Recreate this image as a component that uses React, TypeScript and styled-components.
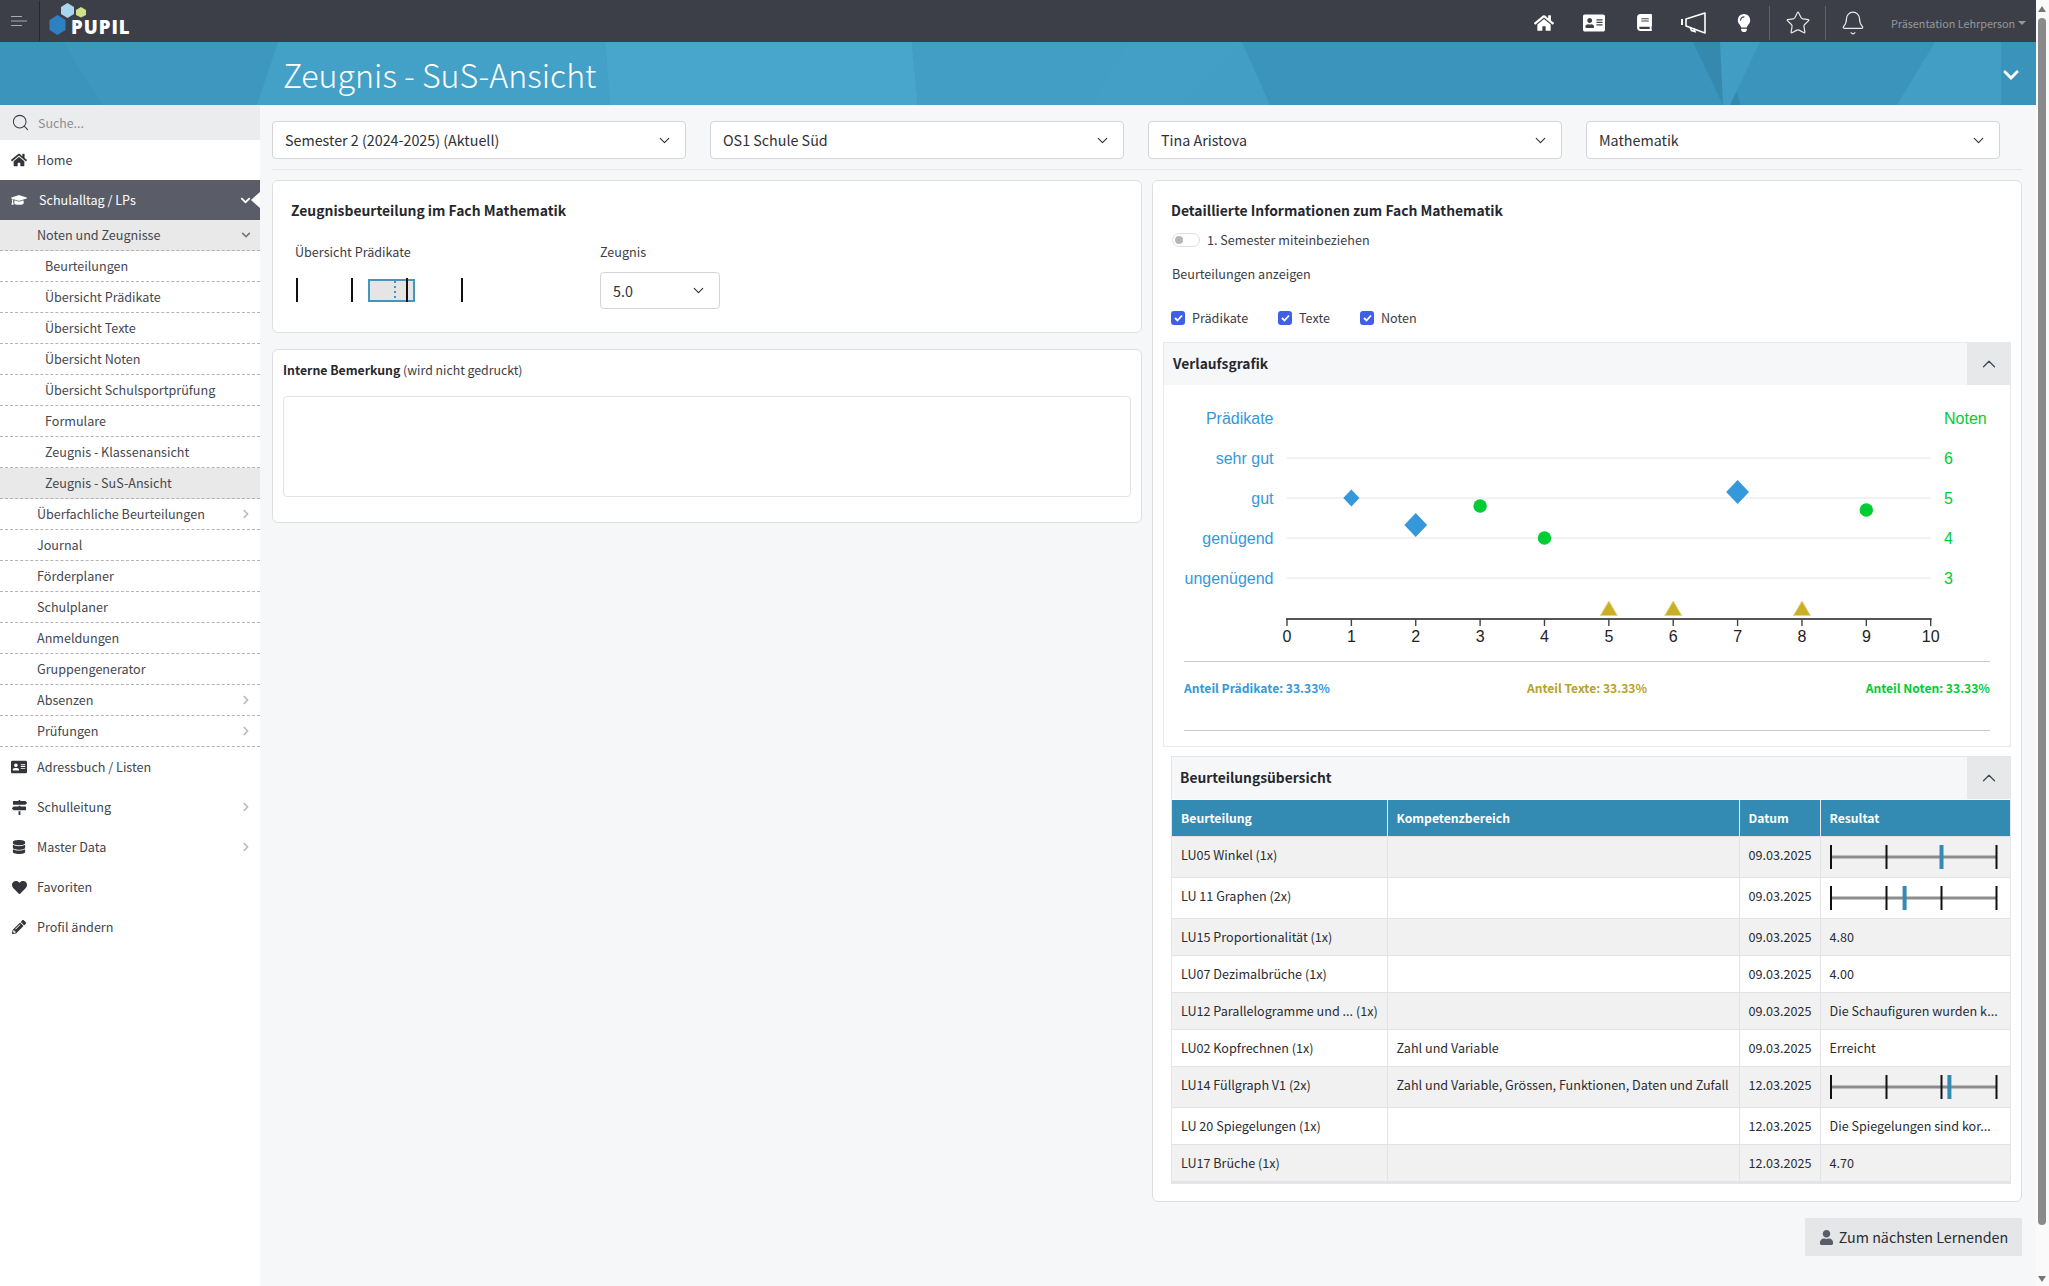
import styled, { createGlobalStyle } from 'styled-components';
import { FaAddressCard, FaBook, FaChevronDown, FaChevronRight, FaDatabase, FaGraduationCap, FaHeart, FaHome, FaLightbulb, FaMapSigns, FaPencilAlt, FaUser } from 'react-icons/fa';
import { Bell, ChevronDown, ChevronUp, Search, Star } from 'lucide-react';

const SANS = '"Noto Sans CJK JP", "Noto Sans", sans-serif';
const ARIAL = '"Liberation Sans", Arial, sans-serif';

const GlobalStyle = createGlobalStyle`
  html, body { margin: 0; padding: 0; height: 100%; overflow: hidden; }
  body { font-family: ${SANS}; font-size: 12.6px; line-height: 20px; color: #3a3d45; background: #f6f7f9; }
  * { box-sizing: border-box; }
`;

const Shell = styled.div`
  display: flex;
  width: 2049px;
  height: 1286px;
  overflow: hidden;
`;

const Page = styled.div`
  width: 2036px;
  display: flex;
  flex-direction: column;
`;

const ScrollTrack = styled.div`
  width: 13px;
  background: #fafafa;
  display: flex;
  flex-direction: column;
  align-items: flex-start;
  padding: 6px 0 4px 2px;
`;

const ScrollThumb = styled.div`
  width: 8px;
  height: 1207px;
  margin-top: 6px;
  background: #8a8a8a;
  border-radius: 4px;
`;

const ScrollArrow = styled.div<{ $down?: boolean }>`
  width: 0;
  height: 0;
  border-left: 4px solid transparent;
  border-right: 4px solid transparent;
  ${(p) => (p.$down ? 'border-top: 6px solid #777; margin-top: auto;' : 'border-bottom: 6px solid #777;')}
`;

const TopBar = styled.header`
  height: 42px;
  flex: none;
  background: #3c3f48;
  display: flex;
  align-items: center;
`;

const MenuCell = styled.div`
  width: 40px;
  height: 40px;
  display: flex;
  align-items: center;
  justify-content: center;
  border-right: 1px solid #26282e;
  padding-right: 1px;
`;

const LogoCell = styled.div`
  margin-left: 9px;
  width: 100px;
  height: 42px;
  position: relative;
`;

const LogoMark = styled.svg`
  position: absolute;
  left: 0;
  top: 2px;
`;

const LogoWord = styled.span`
  position: absolute;
  left: 22px;
  top: 16px;
  font-family: "Open Sans", sans-serif;
  font-weight: 800;
  font-size: 18.500px;
  line-height: 22px;
  letter-spacing: 1px;
  color: #fff;
`;

const TopIcons = styled.div`
  margin-left: auto;
  padding-top: 3px;
  display: flex;
  align-items: center;
  height: 100%;
`;

const TopIcon = styled.div<{ $w?: number; $divider?: boolean }>`
  width: ${(p) => p.$w ?? 50}px;
  height: 34px;
  display: flex;
  align-items: center;
  justify-content: center;
  color: #fff;
  border-left: ${(p) => (p.$divider ? '1px solid #5f626b' : 'none')};
`;

const UserMenu = styled.div`
  width: 157px;
  padding-left: 12px;
  color: #95979c;
  font-size: 10.8px;
  white-space: nowrap;
  display: flex;
  align-items: center;
  gap: 3px;
`;

const Caret = styled.span`
  width: 0;
  height: 0;
  border-left: 4px solid transparent;
  border-right: 4px solid transparent;
  border-top: 4px solid #95979c;
`;

const Banner = styled.section`
  height: 63px;
  flex: none;
  position: relative;
  background: #3b94bb;
  display: flex;
  align-items: center;
  padding-left: 283px;
  overflow: hidden;
`;

const BannerArt = styled.svg`
  position: absolute;
  left: 0;
  top: 0;
`;

const BannerTitle = styled.h1`
  position: relative;
  margin: 0;
  font-family: "Noto Sans CJK JP Light", ${SANS};
  font-weight: 300;
  font-size: 32.2px;
  line-height: 46px;
  color: #fff;
`;

const BannerToggle = styled.div`
  position: absolute;
  right: 0;
  top: 0;
  width: 35px;
  height: 63px;
  padding: 2px 0 0 1px;
  background: #3a93ba;
  color: #fff;
  display: flex;
  align-items: center;
`;

const Body = styled.div`
  flex: 1;
  display: flex;
  min-height: 0;
`;

const Sidebar = styled.nav`
  width: 260px;
  flex: none;
  background: #fff;
`;

const SearchRow = styled.div`
  height: 35px;
  background: #ebecee;
  display: flex;
  align-items: center;
  padding-left: 11px;
  gap: 8px;
  color: #8c8e94;
  font-size: 12.4px;
`;

const SearchIcon = styled(Search)`
  color: #3c3f48;
`;

const MainItem = styled.div<{ $active?: boolean }>`
  height: 40px;
  position: relative;
  display: flex;
  align-items: center;
  padding: 0 9px 0 11px;
  gap: ${(p) => (p.$active ? 12 : 10)}px;
  color: ${(p) => (p.$active ? '#fff' : '#41444c')};
  background: ${(p) => (p.$active ? '#5a5d67' : '#fff')};
  ${(p) =>
    p.$active &&
    `&::after {
      content: '';
      position: absolute;
      right: 0;
      top: 12px;
      border-top: 8px solid transparent;
      border-bottom: 8px solid transparent;
      border-right: 9px solid #fff;
    }`}
`;

const MainIcon = styled.span<{ $dark?: boolean }>`
  width: 16px;
  display: flex;
  justify-content: center;
  color: ${(p) => (p.$dark ? '#33353b' : 'inherit')};
  font-size: 15px;
`;

const Grow = styled.span`
  flex: 1;
`;

const SubItem = styled.div<{ $depth?: number; $shaded?: boolean }>`
  height: 31px;
  display: flex;
  align-items: center;
  padding-left: ${(p) => ((p.$depth ?? 1) === 2 ? 45 : 37)}px;
  padding-right: 9px;
  color: #45474f;
  background: ${(p) => (p.$shaded ? '#e9e9e9' : '#fff')};
  border-bottom: 1px dashed #b4b4b4;
`;

const SubChevron = styled.span<{ $dark?: boolean }>`
  color: ${(p) => (p.$dark ? '#77797e' : '#b9bbbe')};
  font-size: 10px;
  display: flex;
`;

const Content = styled.main`
  flex: 1;
  min-width: 0;
  padding: 16px 14px 0 12px;
`;

const Filters = styled.div`
  display: flex;
  gap: 24.500px;
  padding-bottom: 10px;
  border-bottom: 1px solid #e5e7ea;
  margin-bottom: 10px;
`;

const SelectBox = styled.div`
  width: 413.500px;
  height: 38px;
  background: #fff;
  border: 1px solid #d2d5da;
  border-radius: 4px;
  display: flex;
  align-items: center;
  justify-content: space-between;
  padding: 0 12px;
  font-size: 14.3px;
  color: #2f3137;
`;

const GradeSelect = styled(SelectBox)`
  width: 120px;
  height: 37px;
  margin-top: 10px;
`;

const Columns = styled.div`
  display: grid;
  grid-template-columns: 870px 870px;
  gap: 10px;
  align-items: start;
`;

const Stack = styled.div`
  display: flex;
  flex-direction: column;
`;

const Card = styled.section`
  background: #fff;
  border: 1px solid #dcdee2;
  border-radius: 6px;
`;

const GradeCard = styled(Card)`
  height: 153px;
  padding: 19px 18px 0;
  margin-bottom: 16px;
`;

const CardTitle = styled.h2`
  margin: 0;
  font-size: 13.9px;
  font-weight: 700;
  line-height: 20px;
  color: #26282d;
`;

const GradeRow = styled.div`
  display: flex;
  margin: 22px 0 0 4px;
`;

const GradeOverview = styled.div`
  width: 305px;
`;

const FieldLabel = styled.div`
  line-height: 20px;
  color: #3a3d45;
`;

const MiniScale = styled.svg`
  display: block;
  margin-top: 16px;
`;

const NoteCard = styled(Card)`
  height: 174px;
  padding: 10px 10px 0;
`;

const NoteTitle = styled.div`
  font-size: 12.3px;
  color: #3a3d45;
  b {
    color: #26282d;
    font-weight: 700;
  }
`;

const NoteArea = styled.div`
  height: 101px;
  margin-top: 16px;
  border: 1px solid #e2e3e6;
  border-radius: 4px;
`;

const DetailCard = styled(Card)`
  height: 1022px;
  padding: 19px 10px 0;
`;

const DetailTitle = styled(CardTitle)`
  padding-left: 8px;
`;

const ToggleRow = styled.div`
  margin: 10px 0 14px 9px;
  display: flex;
  align-items: center;
  gap: 7px;
`;

const ToggleTrack = styled.span`
  width: 28px;
  height: 14px;
  border: 1px solid #dcdee3;
  border-radius: 7px;
  background: #fff;
  display: flex;
  align-items: center;
  padding-left: 2px;
`;

const ToggleKnob = styled.span`
  width: 8px;
  height: 8px;
  border-radius: 50%;
  background: #b5b6b9;
`;

const PlainLine = styled.div`
  margin-left: 9px;
`;

const CheckRow = styled.div`
  margin: 24px 0 14px 8px;
  display: flex;
  height: 20px;
`;

const CheckItem = styled.label<{ $w: number }>`
  width: ${(p) => p.$w}px;
  display: flex;
  align-items: center;
  gap: 7px;
`;

const CheckBox = styled.span`
  width: 14px;
  height: 14px;
  border-radius: 3px;
  background: #3f5fe8;
  display: flex;
  align-items: center;
  justify-content: center;
`;

const Panel = styled.div`
  height: 405px;
  border: 1px solid #e8e9eb;
`;

const PanelHead = styled.div<{ $inset?: number }>`
  height: 42px;
  background: #f6f7f9;
  display: flex;
  align-items: center;
  justify-content: space-between;
  padding-left: ${(p) => p.$inset ?? 9}px;
`;

const PanelTitle = styled.span<{ $lift?: number }>`
  font-weight: 700;
  font-size: 13.8px;
  color: #26282d;
  margin-bottom: ${(p) => p.$lift ?? 2}px;
`;

const PanelButton = styled.div`
  width: 43px;
  height: 100%;
  background: #e7e8ea;
  display: flex;
  align-items: center;
  justify-content: center;
  color: #3d4352;
`;

const ChartSvg = styled.svg`
  display: block;
`;

const Stats = styled.div`
  margin: 0 20px;
  height: 70px;
  padding-top: 16px;
  border-top: 1px solid #c9cacc;
  border-bottom: 1px solid #c9cacc;
  display: grid;
  grid-template-columns: 1fr auto 1fr;
  font-weight: 700;
  font-size: 12.1px;
`;

const Stat = styled.span<{ $color: string; $end?: boolean }>`
  color: ${(p) => p.$color};
  justify-self: ${(p) => (p.$end ? 'end' : 'start')};
`;

const TablePanel = styled.div`
  margin: 9px 0 0 8px;
  border: 1px solid #e4e6e9;
  border-bottom-width: 2px;
`;

const Table = styled.table`
  width: 838px;
  table-layout: fixed;
  border-collapse: collapse;
  color: #2a2c31;
  margin-top: 1px;
`;

const HeadCell = styled.th<{ $w: number }>`
  width: ${(p) => p.$w}px;
  height: 36px;
  background: #338bb3;
  color: #fff;
  font-size: 12.2px;
  font-weight: 700;
  text-align: left;
  padding: 0 9px;
  border-right: 1px solid #e4e6e9;
  &:last-child {
    border-right: none;
  }
`;

const Row = styled.tr<{ $tall?: boolean }>`
  height: ${(p) => (p.$tall ? 41 : 37)}px;
  &:nth-child(odd) {
    background: #f1f1f1;
  }
`;

const Cell = styled.td<{ $raised?: boolean }>`
  padding: 0 9px ${(p) => (p.$raised ? 3 : 0)}px;
  border: 1px solid #e1e3e6;
  border-left: none;
  white-space: nowrap;
  overflow: hidden;
  &:last-child {
    border-right: none;
  }
`;

const ResultSvg = styled.svg`
  display: block;
`;

const Footer = styled.div`
  display: flex;
  justify-content: flex-end;
  margin-top: 16px;
`;

const NextButton = styled.div`
  width: 217px;
  height: 38px;
  background: #e5e6e8;
  display: flex;
  align-items: center;
  justify-content: center;
  gap: 5px;
  font-size: 14.3px;
  color: #2a2c31;
`;

const X0 = 1287;
const STEP = 64.37;
const xAt = (n: number) => X0 + STEP * n;
const LEVELS: [string, string, number][] = [
  ['sehr gut', '6', 458],
  ['gut', '5', 498],
  ['genügend', '4', 538],
  ['ungenügend', '3', 578],
];

function Diamond({ n, y, r }: { n: number; y: number; r: number }) {
  const x = xAt(n);
  return <polygon points={`${x},${y - r} ${x + r * 0.95},${y} ${x},${y + r} ${x - r * 0.95},${y}`} fill="#3498db" />;
}

function Triangle({ n }: { n: number }) {
  const x = xAt(n);
  return <polygon points={`${x},601 ${x + 8.5},615.5 ${x - 8.5},615.5`} fill="#c9ae26" stroke="#e2d48a" strokeWidth="1" />;
}

function Chart() {
  return (
    <ChartSvg width="846" height="276" viewBox="1164 385 846 276">
      <g fontFamily={ARIAL} fontSize="16">
        <text x="1273.5" y="424" textAnchor="end" fill="#3498db">Prädikate</text>
        <text x="1944" y="424" fill="#00cc33">Noten</text>
        {LEVELS.map(([label, note, y]) => (
          <g key={label}>
            <line x1={X0} x2={X0 + STEP * 10} y1={y} y2={y} stroke="#eeeeee" strokeWidth="1.5" />
            <text x="1273.5" y={y + 6} textAnchor="end" fill="#3498db">{label}</text>
            <text x="1944" y={y + 6} fill="#00cc33">{note}</text>
          </g>
        ))}
      </g>
      <Diamond n={1} y={498} r={8.5} />
      <Diamond n={2} y={525} r={12} />
      <Diamond n={7} y={492} r={12} />
      <circle cx={xAt(3)} cy={506} r={6.7} fill="#00cc33" />
      <circle cx={xAt(4)} cy={538} r={6.7} fill="#00cc33" />
      <circle cx={xAt(9)} cy={510} r={6.7} fill="#00cc33" />
      <Triangle n={5} />
      <Triangle n={6} />
      <Triangle n={8} />
      <line x1={X0 - 1} x2={X0 + STEP * 10 + 1} y1="619" y2="619" stroke="#555" strokeWidth="2" />
      {Array.from({ length: 11 }, (_, n) => (
        <g key={n}>
          <line x1={xAt(n)} x2={xAt(n)} y1="619" y2="626" stroke="#444" strokeWidth="1.4" />
          <text x={xAt(n)} y="642" textAnchor="middle" fontFamily={ARIAL} fontSize="16" fill="#222">{n}</text>
        </g>
      ))}
    </ChartSvg>
  );
}

function ResultBar({ at }: { at: number }) {
  return (
    <ResultSvg width="171" height="26" viewBox="0 0 171 26">
      <line x1="1" x2="167" y1="13" y2="13" stroke="#8c8c8c" strokeWidth="3" />
      {[1, 56.5, 111.5, 166.5].map((x) => (
        <line key={x} x1={x} x2={x} y1="1" y2="25" stroke="#111" strokeWidth="2" />
      ))}
      <rect x={at - 2} y="1" width="4" height="24" fill="#338bb3" />
    </ResultSvg>
  );
}

const Hamburger = () => (
  <svg width="18" height="12" viewBox="0 0 18 12">
    <path d="M1 1.5h11M1 6h16M1 10.5h11" stroke="#a9abaf" strokeWidth="1" fill="none" />
  </svg>
);

const Logo = () => (
  <LogoMark width="48" height="36" viewBox="0 0 48 36">
    <polygon points="8.5,13 16.5,18 16.5,28 8.5,33 0.5,28 0.5,18" fill="#2f80c2" />
    <polygon points="18.5,1 25,5 25,12 18.5,16 12,12 12,5" fill="#a9d6ef" />
    <polygon points="32,5 37,8 37,13 32,15.5 27,13 27,8" fill="#cfe08a" />
  </LogoMark>
);

const Megaphone = () => (
  <svg width="26" height="22" viewBox="0 0 26 22" fill="none" stroke="#fff" strokeWidth="1.6">
    <path d="M1 7v6" strokeWidth="2" />
    <path d="M5 7l19-6v20L5 14z" strokeLinejoin="round" />
    <path d="M9 15l1.500 3.500 3.500 1-1-3" />
  </svg>
);

function Check() {
  return (
    <svg width="9" height="8" viewBox="0 0 9 8">
      <path d="M1 4l2.500 2.500L8 1.500" stroke="#fff" strokeWidth="1.8" fill="none" />
    </svg>
  );
}

const SUBMENU = ['Beurteilungen', 'Übersicht Prädikate', 'Übersicht Texte', 'Übersicht Noten', 'Übersicht Schulsportprüfung', 'Formulare', 'Zeugnis - Klassenansicht'];

const ROWS: { name: string; area?: string; date: string; result?: string; bar?: number }[] = [
  { name: 'LU05 Winkel (1x)', date: '09.03.2025', bar: 111.5 },
  { name: 'LU 11 Graphen (2x)', date: '09.03.2025', bar: 74.6 },
  { name: 'LU15 Proportionalität (1x)', date: '09.03.2025', result: '4.80' },
  { name: 'LU07 Dezimalbrüche (1x)', date: '09.03.2025', result: '4.00' },
  { name: 'LU12 Parallelogramme und ... (1x)', date: '09.03.2025', result: 'Die Schaufiguren wurden k...' },
  { name: 'LU02 Kopfrechnen (1x)', area: 'Zahl und Variable', date: '09.03.2025', result: 'Erreicht' },
  { name: 'LU14 Füllgraph V1 (2x)', area: 'Zahl und Variable, Grössen, Funktionen, Daten und Zufall', date: '12.03.2025', bar: 119.4 },
  { name: 'LU 20 Spiegelungen (1x)', date: '12.03.2025', result: 'Die Spiegelungen sind kor...' },
  { name: 'LU17 Brüche (1x)', date: '12.03.2025', result: '4.70' },
];

export default function App() {
  return (
    <>
      <GlobalStyle />
      <Shell>
        <Page>
          <TopBar>
            <MenuCell><Hamburger /></MenuCell>
            <LogoCell>
              <Logo />
              <LogoWord>PUPIL</LogoWord>
            </LogoCell>
            <TopIcons>
              <TopIcon><FaHome size={20} /></TopIcon>
              <TopIcon><FaAddressCard size={22} /></TopIcon>
              <TopIcon><FaBook size={17} /></TopIcon>
              <TopIcon><Megaphone /></TopIcon>
              <TopIcon><FaLightbulb size={18} /></TopIcon>
              <TopIcon $w={56} $divider><Star size={26} strokeWidth={1.1} color="#e8e8e8" /></TopIcon>
              <TopIcon $w={54} $divider><Bell size={26} strokeWidth={1.1} color="#e8e8e8" /></TopIcon>
              <UserMenu>Präsentation Lehrperson<Caret /></UserMenu>
            </TopIcons>
          </TopBar>

          <Banner>
            <BannerArt width="2036" height="63" viewBox="0 0 2036 63">
              <polygon points="63,0 278,0 257,63 102,63" fill="#3d97be" />
              <polygon points="278,0 605,0 610,63 257,63" fill="#43a0c7" />
              <polygon points="605,0 912,0 918,63 610,63" fill="#48a5cc" />
              <polygon points="912,0 1242,0 1270,63 918,63" fill="#429ec5" />
              <polygon points="1130,0 1240,0 1180,63 1090,63" fill="#449fc6" />
              <polygon points="1693,0 1720,0 1741,63 1723,63" fill="#3588ae" />
              <polygon points="1720,0 1760,0 1730,63 1723,63" fill="#419dc4" />
              <polygon points="1935,0 2036,0 2036,63 1897,63" fill="#429ec5" />
            </BannerArt>
            <BannerTitle>Zeugnis - SuS-Ansicht</BannerTitle>
            <BannerToggle><FaChevronDown size={18} /></BannerToggle>
          </Banner>

          <Body>
            <Sidebar>
              <SearchRow><SearchIcon size={19} strokeWidth={1.3} />Suche...</SearchRow>
              <MainItem><MainIcon $dark><FaHome size={16} /></MainIcon>Home</MainItem>
              <MainItem $active>
                <MainIcon><FaGraduationCap size={18} /></MainIcon>
                <Grow>Schulalltag / LPs</Grow>
                <FaChevronDown size={11} />
              </MainItem>
              <SubItem $shaded>
                <Grow>Noten und Zeugnisse</Grow>
                <SubChevron $dark><FaChevronDown /></SubChevron>
              </SubItem>
              {SUBMENU.map((item) => (
                <SubItem key={item} $depth={2}>{item}</SubItem>
              ))}
              <SubItem $depth={2} $shaded>Zeugnis - SuS-Ansicht</SubItem>
              <SubItem><Grow>Überfachliche Beurteilungen</Grow><SubChevron><FaChevronRight /></SubChevron></SubItem>
              <SubItem>Journal</SubItem>
              <SubItem>Förderplaner</SubItem>
              <SubItem>Schulplaner</SubItem>
              <SubItem>Anmeldungen</SubItem>
              <SubItem>Gruppengenerator</SubItem>
              <SubItem><Grow>Absenzen</Grow><SubChevron><FaChevronRight /></SubChevron></SubItem>
              <SubItem><Grow>Prüfungen</Grow><SubChevron><FaChevronRight /></SubChevron></SubItem>
              <MainItem><MainIcon $dark><FaAddressCard size={16} /></MainIcon>Adressbuch / Listen</MainItem>
              <MainItem><MainIcon $dark><FaMapSigns size={15} /></MainIcon><Grow>Schulleitung</Grow><SubChevron><FaChevronRight /></SubChevron></MainItem>
              <MainItem><MainIcon $dark><FaDatabase size={14} /></MainIcon><Grow>Master Data</Grow><SubChevron><FaChevronRight /></SubChevron></MainItem>
              <MainItem><MainIcon $dark><FaHeart size={15} /></MainIcon>Favoriten</MainItem>
              <MainItem><MainIcon $dark><FaPencilAlt size={14} /></MainIcon>Profil ändern</MainItem>
            </Sidebar>

            <Content>
              <Filters>
                {['Semester 2 (2024-2025) (Aktuell)', 'OS1 Schule Süd', 'Tina Aristova', 'Mathematik'].map((v) => (
                  <SelectBox key={v}>{v}<ChevronDown size={17} strokeWidth={1.6} /></SelectBox>
                ))}
              </Filters>

              <Columns>
                <Stack>
                  <GradeCard>
                    <CardTitle>Zeugnisbeurteilung im Fach Mathematik</CardTitle>
                    <GradeRow>
                      <GradeOverview>
                        <FieldLabel>Übersicht Prädikate</FieldLabel>
                        <MiniScale width="180" height="26" viewBox="0 0 180 26">
                          <rect x="74" y="2" width="45" height="21" fill="#e5e5e5" stroke="#4596bd" strokeWidth="2" />
                          <line x1="100" x2="100" y1="3" y2="23" stroke="#4596bd" strokeWidth="2" strokeDasharray="2 3" />
                          {[2, 57, 112, 167].map((x) => (
                            <line key={x} x1={x} x2={x} y1="0" y2="24" stroke="#111" strokeWidth="2" />
                          ))}
                        </MiniScale>
                      </GradeOverview>
                      <div>
                        <FieldLabel>Zeugnis</FieldLabel>
                        <GradeSelect>5.0<ChevronDown size={17} strokeWidth={1.6} /></GradeSelect>
                      </div>
                    </GradeRow>
                  </GradeCard>
                  <NoteCard>
                    <NoteTitle><b>Interne Bemerkung</b> (wird nicht gedruckt)</NoteTitle>
                    <NoteArea />
                  </NoteCard>
                </Stack>

                <Stack>
                  <DetailCard>
                    <DetailTitle>Detaillierte Informationen zum Fach Mathematik</DetailTitle>
                    <ToggleRow><ToggleTrack><ToggleKnob /></ToggleTrack>1. Semester miteinbeziehen</ToggleRow>
                    <PlainLine>Beurteilungen anzeigen</PlainLine>
                    <CheckRow>
                      <CheckItem $w={107}><CheckBox><Check /></CheckBox>Prädikate</CheckItem>
                      <CheckItem $w={82}><CheckBox><Check /></CheckBox>Texte</CheckItem>
                      <CheckItem $w={80}><CheckBox><Check /></CheckBox>Noten</CheckItem>
                    </CheckRow>
                    <Panel>
                      <PanelHead>
                        <PanelTitle>Verlaufsgrafik</PanelTitle>
                        <PanelButton><ChevronUp size={22} strokeWidth={1.3} /></PanelButton>
                      </PanelHead>
                      <Chart />
                      <Stats>
                        <Stat $color="#3498db">Anteil Prädikate: 33.33%</Stat>
                        <Stat $color="#b7a32b">Anteil Texte: 33.33%</Stat>
                        <Stat $color="#00cc33" $end>Anteil Noten: 33.33%</Stat>
                      </Stats>
                    </Panel>
                    <TablePanel>
                      <PanelHead $inset={8}>
                        <PanelTitle $lift={3}>Beurteilungsübersicht</PanelTitle>
                        <PanelButton><ChevronUp size={22} strokeWidth={1.3} /></PanelButton>
                      </PanelHead>
                      <Table>
                        <thead>
                          <tr>
                            <HeadCell $w={215}>Beurteilung</HeadCell>
                            <HeadCell $w={352}>Kompetenzbereich</HeadCell>
                            <HeadCell $w={81}>Datum</HeadCell>
                            <HeadCell $w={190}>Resultat</HeadCell>
                          </tr>
                        </thead>
                        <tbody>
                          {ROWS.map((r) => {
                            const tall = r.bar !== undefined;
                            return (
                              <Row key={r.name} $tall={tall}>
                                <Cell $raised={tall}>{r.name}</Cell>
                                <Cell $raised={tall}>{r.area}</Cell>
                                <Cell $raised={tall}>{r.date}</Cell>
                                <Cell>{r.bar !== undefined ? <ResultBar at={r.bar} /> : r.result}</Cell>
                              </Row>
                            );
                          })}
                        </tbody>
                      </Table>
                    </TablePanel>
                  </DetailCard>
                  <Footer>
                    <NextButton><FaUser size={15} color="#5a5d67" />Zum nächsten Lernenden</NextButton>
                  </Footer>
                </Stack>
              </Columns>
            </Content>
          </Body>
        </Page>
        <ScrollTrack>
          <ScrollArrow />
          <ScrollThumb />
          <ScrollArrow $down />
        </ScrollTrack>
      </Shell>
    </>
  );
}
